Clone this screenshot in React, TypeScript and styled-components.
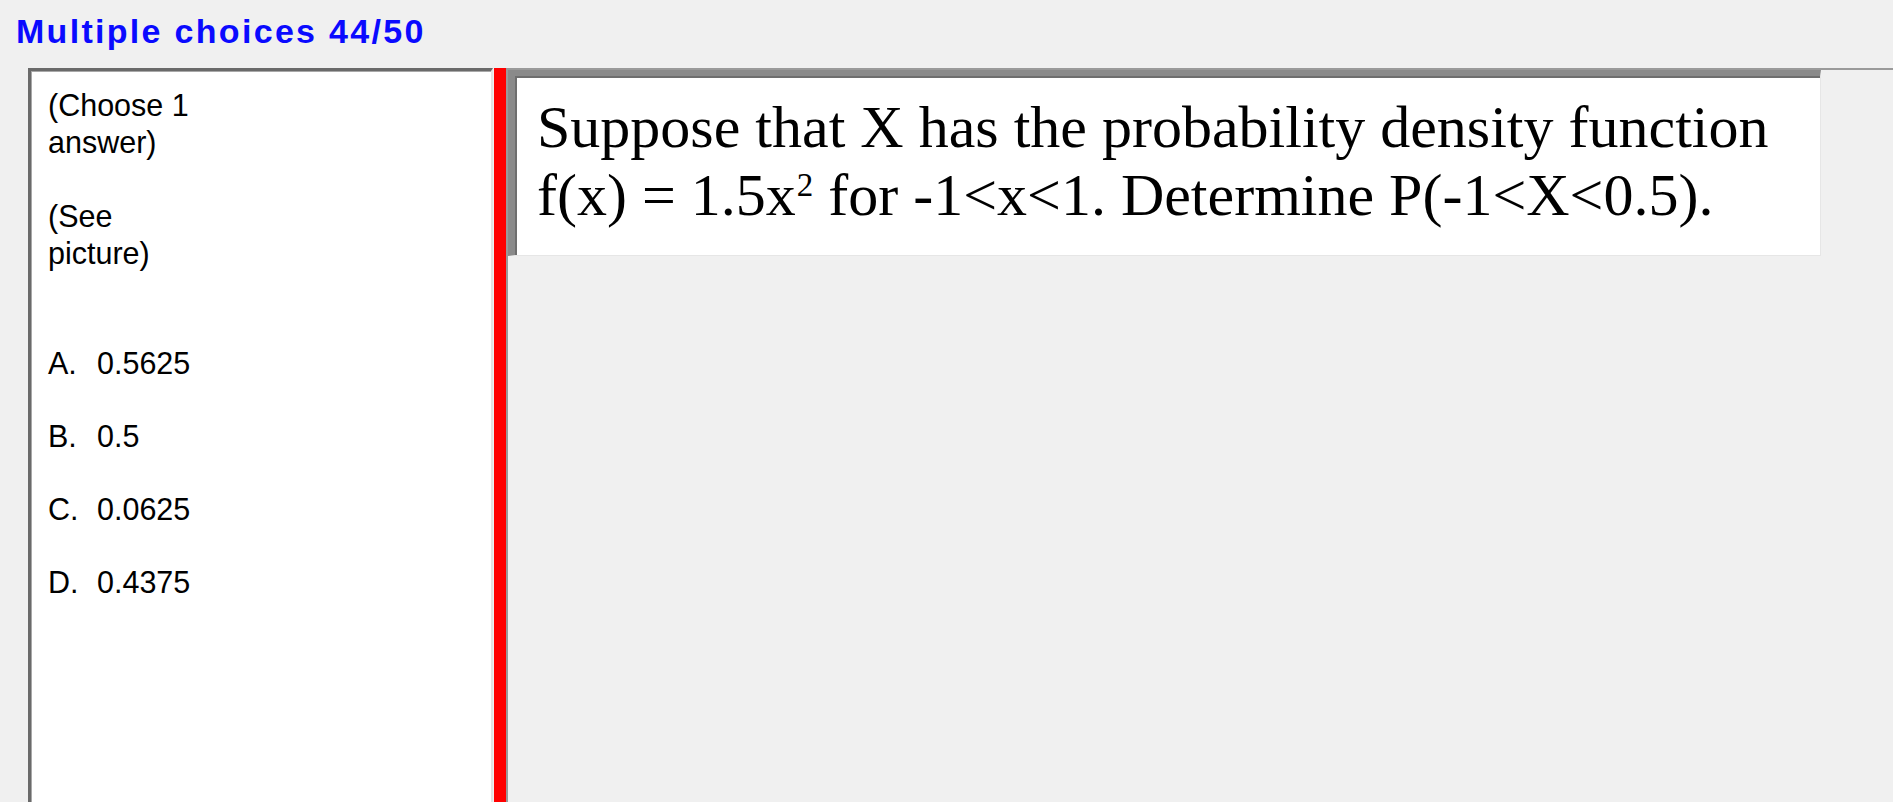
import React from "react";
import styled, { createGlobalStyle } from "styled-components";

const GlobalStyle = createGlobalStyle`
  html, body {
    margin: 0;
    padding: 0;
    background: #f0f0f0;
    overflow: hidden;
  }
  #root {
    height: 100vh;
  }
`;

const Page = styled.div`
  height: 100vh;
  display: flex;
  flex-direction: column;
  background: #f0f0f0;
  overflow: hidden;
`;

const Header = styled.h1`
  margin: 0 0 17px 0;
  padding: 11px 0 0 16px;
  font-family: "Liberation Sans", Arial, sans-serif;
  font-weight: 700;
  font-size: 34px;
  line-height: 40px;
  letter-spacing: 2.3px;
  color: #0a0aff;
`;

const Workspace = styled.div`
  flex: 1;
  display: flex;
  align-items: stretch;
  padding-left: 28px;
  min-height: 0;
`;

const AnswerPanel = styled.div`
  width: 465px;
  box-sizing: border-box;
  background: #ffffff;
  border-style: solid;
  border-width: 3px 2px 0 3px;
  border-color: #6a6a6a #e3e3e3 #e3e3e3 #6a6a6a;
  box-shadow: inset 1px 1px 0 #a8a8a8;
  padding: 16px 12px 0 17px;
  font-family: "Liberation Sans", Arial, sans-serif;
  font-size: 30.5px;
  line-height: 37px;
  color: #000;
  display: flex;
  flex-direction: column;
`;

const Note = styled.p<{ $after: number }>`
  margin: 0 0 ${(p) => p.$after}px 0;
  width: 150px;
`;

const OptionList = styled.ol`
  list-style: none;
  margin: 0;
  padding: 0;
  display: flex;
  flex-direction: column;
  gap: 36px;
`;

const Option = styled.li`
  display: flex;
`;

const OptionLetter = styled.span`
  width: 49px;
  flex: none;
`;

const Splitter = styled.div`
  width: 12px;
  margin-left: 1px;
  background: #ff0000;
  flex: none;
`;

const QuestionFrame = styled.div`
  flex: 1;
  border-style: solid;
  border-width: 2px 0 0 2px;
  border-color: #9a9a9a;
  background: #f0f0f0;
  display: flex;
  flex-direction: column;
  align-items: flex-start;
`;

const QuestionBox = styled.div`
  width: 1313px;
  box-sizing: border-box;
  background: #ffffff;
  border-style: solid;
  border-width: 6px 1px 1px 7px;
  border-color: #8a8a8a #e6e6e6 #e6e6e6 #8a8a8a;
  box-shadow: inset 2px 2px 0 #6e6e6e;
  padding: 17px 20px 26px 22px;
  font-family: "Liberation Serif", "Times New Roman", serif;
  font-size: 60px;
  line-height: 68px;
  color: #000;
`;

const Sup = styled.span`
  display: inline-block;
  font-size: 33px;
  line-height: 33px;
  vertical-align: 19px;
  margin-left: 1px;
`;

const options = [
  { letter: "A.", value: "0.5625" },
  { letter: "B.", value: "0.5" },
  { letter: "C.", value: "0.0625" },
  { letter: "D.", value: "0.4375" },
];

export default function App() {
  return (
    <>
      <GlobalStyle />
      <Page>
        <Header>Multiple choices 44/50</Header>
        <Workspace>
          <AnswerPanel>
            <Note $after={37}>(Choose 1 answer)</Note>
            <Note $after={73}>(See picture)</Note>
            <OptionList>
              {options.map((o) => (
                <Option key={o.letter}>
                  <OptionLetter>{o.letter}</OptionLetter>
                  <span>{o.value}</span>
                </Option>
              ))}
            </OptionList>
          </AnswerPanel>
          <Splitter />
          <QuestionFrame>
            <QuestionBox>
              Suppose that X has the probability density function f(x) = 1.5x
              <Sup>2</Sup> for -1&lt;x&lt;1. Determine P(-1&lt;X&lt;0.5).
            </QuestionBox>
          </QuestionFrame>
        </Workspace>
      </Page>
    </>
  );
}
